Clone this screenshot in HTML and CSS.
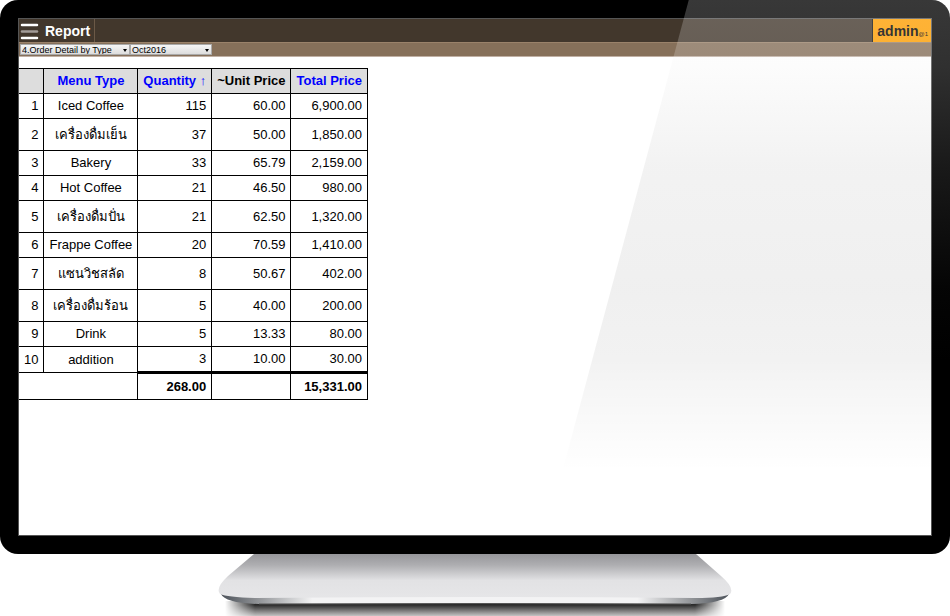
FILE: index.html
```html
<!DOCTYPE html>
<html lang="en">
<head>
<meta charset="utf-8">
<title>Report</title>
<link rel="stylesheet" href="styles.css">
</head>
<body>
<div class="monitor">
  <div class="screen">
    <header class="topbar">
      <button class="menu" type="button">
        <svg class="menu-icon" width="19" height="18" viewBox="0 0 19 18" aria-hidden="true">
          <path d="M2 3H17M2 16H17" stroke="#fff" stroke-width="2.500" stroke-linecap="round"/>
          <path d="M2 9.500H17" stroke="#a39c98" stroke-width="2.500" stroke-linecap="round"/>
        </svg>
        <span>Report</span>
      </button>
      <a class="user" href="#">admin<small>@1</small></a>
    </header>
    <form class="filters">
      <label class="pick pick-report">
        <select aria-label="Report type"><option>4.Order Detail by Type</option></select>
      </label>
      <label class="pick pick-month">
        <select aria-label="Month"><option>Oct2016</option></select>
      </label>
    </form>
    <main>
      <table class="report">
        <thead>
          <tr><th></th><th><a href="#">Menu Type</a></th><th><a href="#">Quantity ↑</a></th><th>~Unit Price</th><th><a href="#">Total Price</a></th></tr>
        </thead>
        <tbody>
          <tr><td>1</td><td class="name">Iced Coffee</td><td>115</td><td>60.00</td><td>6,900.00</td></tr>
          <tr class="thai"><td>2</td><td class="name" lang="th">เครื่องดื่มเย็น</td><td>37</td><td>50.00</td><td>1,850.00</td></tr>
          <tr><td>3</td><td class="name">Bakery</td><td>33</td><td>65.79</td><td>2,159.00</td></tr>
          <tr><td>4</td><td class="name">Hot Coffee</td><td>21</td><td>46.50</td><td>980.00</td></tr>
          <tr class="thai"><td>5</td><td class="name" lang="th">เครื่องดื่มปั่น</td><td>21</td><td>62.50</td><td>1,320.00</td></tr>
          <tr><td>6</td><td class="name">Frappe Coffee</td><td>20</td><td>70.59</td><td>1,410.00</td></tr>
          <tr class="thai"><td>7</td><td class="name" lang="th">แซนวิชสลัด</td><td>8</td><td>50.67</td><td>402.00</td></tr>
          <tr class="thai"><td>8</td><td class="name" lang="th">เครื่องดื่มร้อน</td><td>5</td><td>40.00</td><td>200.00</td></tr>
          <tr><td>9</td><td class="name">Drink</td><td>5</td><td>13.33</td><td>80.00</td></tr>
          <tr><td>10</td><td class="name">addition</td><td>3</td><td>10.00</td><td>30.00</td></tr>
        </tbody>
        <tfoot>
          <tr><td colspan="2"></td><td class="sum">268.00</td><td class="sum"></td><td class="sum">15,331.00</td></tr>
        </tfoot>
      </table>
    </main>
  </div>
  <div class="glare"></div>
</div>
<svg class="stand" viewBox="0 0 520 62" aria-hidden="true">
  <defs>
    <linearGradient id="plate" x1="0" y1="0" x2="0" y2="1">
      <stop offset="0" stop-color="#96969a"/>
      <stop offset=".25" stop-color="#aeaeb1"/>
      <stop offset=".6" stop-color="#e2e2e4"/>
      <stop offset="1" stop-color="#e6e6e8"/>
    </linearGradient>
    <linearGradient id="edge" x1="0" y1="0" x2="1" y2="0">
      <stop offset="0" stop-color="#4c525a"/>
      <stop offset=".06" stop-color="#85888c"/>
      <stop offset=".18" stop-color="#f3f3f4"/>
      <stop offset=".82" stop-color="#f3f3f4"/>
      <stop offset=".94" stop-color="#85888c"/>
      <stop offset="1" stop-color="#4c525a"/>
    </linearGradient>
    <linearGradient id="shadow" x1="0" y1="0" x2="0" y2="1">
      <stop offset="0" stop-color="#111"/>
      <stop offset=".3" stop-color="#333"/>
      <stop offset="1" stop-color="#c4c4c4"/>
    </linearGradient>
    <linearGradient id="fade" x1="0" y1="0" x2="1" y2="0">
      <stop offset="0" stop-color="#000"/>
      <stop offset=".06" stop-color="#fff"/>
      <stop offset=".94" stop-color="#fff"/>
      <stop offset="1" stop-color="#000"/>
    </linearGradient>
    <mask id="ends"><rect x="10" y="40" width="500" height="22" fill="url(#fade)"/></mask>
  </defs>
  <rect x="10" y="47" width="500" height="15" fill="url(#shadow)" mask="url(#ends)"/>
  <path d="M6 40Q10 49 44 50Q260 49 476 50Q510 49 514 40Z" fill="url(#edge)"/>
  <path d="M44 50Q260 49 476 50" fill="none" stroke="#555" stroke-width="1"/>
  <path d="M39 0H481L506 22Q520 34 515 40Q508 44 480 44Q260 42 40 44Q12 43 5 40Q0 34 13 22Z" fill="url(#plate)"/>
</svg>
</body>
</html>
```
FILE: styles.css
```css
* {
  box-sizing: border-box;
}

body {
  margin: 0;
  min-height: 100vh;
  display: flex;
  flex-direction: column;
  align-items: center;
  background: #fff;
  color: #000;
  font-family: "Liberation Sans", Arial, sans-serif;
  font-size: 13px;
}

.monitor {
  position: relative;
  flex: 1;
  width: 100%;
  display: flex;
  padding: 18px;
  background: #000;
  border-radius: 18px;
  overflow: hidden;
}

.screen {
  flex: 1;
  background: #fff;
  border: 1px solid #555;
}

.topbar {
  display: flex;
  justify-content: space-between;
  height: 23px;
  background: #42372c;
}

.menu {
  display: flex;
  align-items: center;
  gap: 6px;
  padding: 0 4px 0 1px;
  border: 0;
  border-right: 1px solid #6b5947;
  background: none;
  color: #fff;
  font: bold 14px "Liberation Sans", Arial, sans-serif;
}

.user {
  display: flex;
  align-items: baseline;
  padding: 0 3px 0 4px;
  border-left: 1px solid #111;
  background: #ff9f00;
  color: #000;
  font-weight: bold;
  font-size: 14px;
  line-height: 24px;
  text-decoration: none;
}

.user small {
  font-size: 6px;
  font-weight: normal;
}

.filters {
  display: flex;
  height: 15px;
  padding: 1px;
  background: #86705a;
  border-top: 1px solid #9a826a;
  border-bottom: 1px solid #c0b0a4;
}

.pick {
  position: relative;
  display: flex;
}

.pick-report {
  width: 110px;
}

.pick-month {
  width: 82px;
}

.pick select {
  width: 100%;
  padding: 0 1px;
  border: 1px solid #aaa;
  border-radius: 0;
  appearance: none;
  background: linear-gradient(#f6f6f6, #ddd);
  color: #000;
  font: 9px/10px "Liberation Sans", Arial, sans-serif;
}

.pick::after {
  content: "";
  position: absolute;
  right: 3px;
  top: 5px;
  width: 4px;
  height: 3px;
  background: #000;
  clip-path: polygon(0 0, 100% 0, 50% 100%);
  pointer-events: none;
}

.report {
  margin-top: 11px;
  border-collapse: collapse;
  line-height: 16px;
}

.report th,
.report td {
  height: 25px;
  padding: 4px 5px;
  border: 1px solid #000;
  text-align: right;
  white-space: nowrap;
}

.report th {
  background: #ddd;
  text-align: center;
}

.report th a {
  color: #00f;
  text-decoration: none;
}

.report tr > :first-child {
  border-left: 0;
}

.report td.name {
  text-align: center;
}

.report .thai td {
  height: 32px;
}

.report tfoot td {
  height: 27px;
}

.report .sum {
  border-top: 3px solid #000;
  font-weight: bold;
}

.glare {
  position: absolute;
  inset: 0;
  background: linear-gradient(
    rgba(255, 255, 255, .22) 0,
    rgba(240, 240, 240, .2) 12%,
    rgba(170, 170, 170, .15) 30%,
    rgba(60, 60, 60, .08) 52%,
    rgba(0, 0, 0, .05) 65%,
    rgba(0, 0, 0, 0) 85%
  );
  clip-path: polygon(72.5% 0, 100% 0, 100% 85%, 59.2% 85%);
  pointer-events: none;
}

.stand {
  display: block;
  width: 520px;
  max-width: 100%;
  height: 62px;
}
```
